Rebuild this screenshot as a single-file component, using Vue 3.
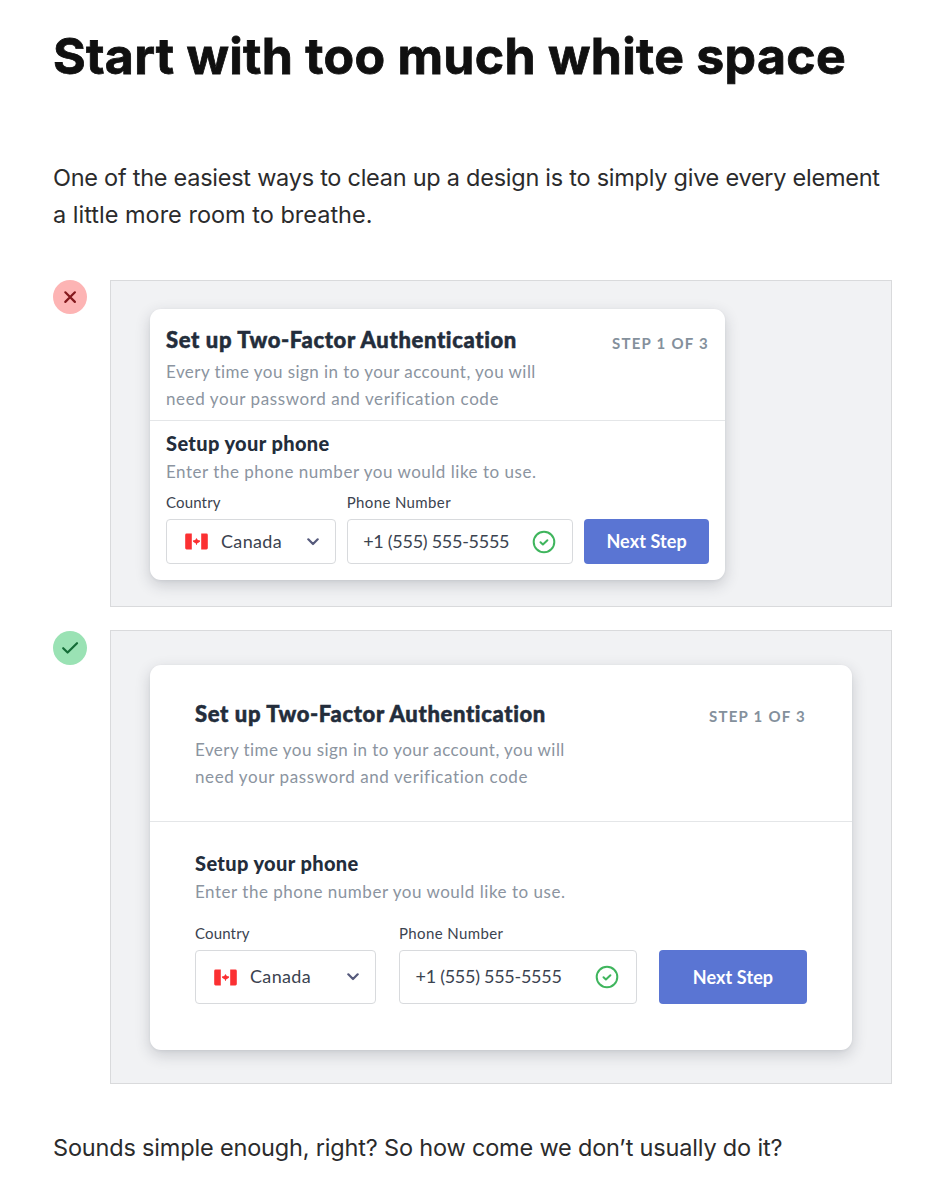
<script setup>
const examples = [
  { kind: 'tight', good: false },
  { kind: 'roomy', good: true },
]
</script>

<template>
  <main class="article">
    <h1>Start with too much white space</h1>
    <p class="intro"><span class="l1">One of the easiest ways to clean up a design is to simply give every element</span><br />a little more room to breathe.</p>

    <section v-for="ex in examples" :key="ex.kind" class="example" :class="ex.kind">
      <svg v-if="ex.good" class="badge" viewBox="0 0 34 34">
        <circle cx="17" cy="17" r="17" fill="#9ae2b4" />
        <path d="M10.200 17.200l4.400 4.300 9.400-9.300" fill="none" stroke="#146c37" stroke-width="2.200" stroke-linecap="round" stroke-linejoin="round" />
      </svg>
      <svg v-else class="badge" viewBox="0 0 34 34">
        <circle cx="17" cy="17" r="17" fill="#fdb4b4" />
        <path d="M12.300 12.300l9.600 9.600M21.900 12.300l-9.600 9.600" fill="none" stroke="#84191d" stroke-width="2.200" stroke-linecap="round" />
      </svg>

      <div class="stage">
        <div class="card">
          <header>
            <div>
              <h2>Set up Two-Factor Authentication</h2>
              <p class="desc">Every time you sign in to your account, you will<br /><span class="d2">need your password and verification code</span></p>
            </div>
            <div class="step">STEP 1 OF 3</div>
          </header>
          <div class="body">
            <h3>Setup your phone</h3>
            <p class="hint">Enter the phone number you would like to use.</p>
            <div class="form">
              <div class="field country">
                <label>Country</label>
                <div class="control">
                  <svg class="flag" viewBox="0 0 23 17">
                    <path d="M1.600.5h5.200v16H1.600A1.400 1.400 0 0 1 .2 15.100V1.900A1.400 1.400 0 0 1 1.600.5zM16.200.5h5.200a1.400 1.400 0 0 1 1.400 1.400v13.200a1.400 1.400 0 0 1-1.400 1.400h-5.200z" fill="#fb3032" />
                    <path d="M11.500 4.900l1.300 2.200 2.300.3-.2 1.400-2.300 1.500-.6.100v1.300h-1v-1.300l-.6-.1-2.300-1.500-.2-1.400 2.300-.3z" fill="#fb3032" />
                  </svg>
                  <span class="value">Canada</span>
                  <svg class="chevron" viewBox="0 0 12 8">
                    <path d="M1.300 1.300L6 6l4.700-4.700" fill="none" stroke="#565a7c" stroke-width="2.200" stroke-linecap="round" stroke-linejoin="round" />
                  </svg>
                </div>
              </div>
              <div class="field phone">
                <label>Phone Number</label>
                <div class="control">
                  <span class="value">+1 (555) 555-5555</span>
                  <svg class="valid" viewBox="0 0 24 24">
                    <circle cx="12" cy="12" r="10.300" fill="none" stroke="#3fb55d" stroke-width="2" />
                    <path d="M8.500 12.300l2.400 2.200 4.500-4.300" fill="none" stroke="#3fb55d" stroke-width="2" stroke-linecap="round" stroke-linejoin="round" />
                  </svg>
                </div>
              </div>
              <button type="button">Next Step</button>
            </div>
          </div>
        </div>
      </div>
    </section>

    <p class="outro">Sounds simple enough, right? So how come we don’t usually do it?</p>
  </main>
</template>

<style>
body { margin: 0; background: #fff; }
</style>

<style scoped>
* { box-sizing: border-box; }
h1, h2, h3, p { margin: 0; }
.article {
  width: 943px;
  height: 1200px;
  overflow: hidden;
  padding: 26px 51px 0 53px;
  font-family: Inter, sans-serif;
  color: #2b2b2c;
  white-space: nowrap;
}
h1 {
  font-size: 50px;
  line-height: 60px;
  font-weight: 700;
  letter-spacing: 0.280px;
  color: #101010;
  -webkit-text-stroke: 0.800px #101010;
}
.intro, .outro { font-size: 23.500px; line-height: 37px; }
.intro { margin-top: 73px; height: 74px; }
.l1 { letter-spacing: -0.260px; }
.example { display: flex; justify-content: space-between; align-items: flex-start; }
.tight { margin-top: 47px; }
.roomy { margin-top: 23px; }
.badge { width: 34px; height: 34px; display: block; }
.roomy .badge { margin-top: 1px; }
.stage {
  width: 782px;
  border: 1px solid #d9dadc;
  background: #f1f2f4;
  padding-left: 39px;
  font-family: Lato, sans-serif;
}
.tight .stage { height: 327px; padding-top: 28px; }
.roomy .stage { height: 454px; padding-top: 34px; }
.card {
  background: #fff;
  border-radius: 11px;
  box-shadow: 0 5px 15px rgba(40, 45, 60, 0.200), 0 1px 3px rgba(40, 45, 60, 0.060);
}
.tight .card { width: 575px; height: 271px; }
.roomy .card { width: 702px; height: 385px; }
header { display: flex; justify-content: space-between; border-bottom: 1px solid #e4e6e8; }
.tight header { height: 112px; padding: 17px 16px 0 16px; }
.roomy header { height: 157px; padding: 35px 46px 0 45px; }
h2 {
  font-size: 22px;
  line-height: 28px;
  font-weight: 900;
  letter-spacing: 0.640px;
  color: #232d3b;
  -webkit-text-stroke: 0.500px #232d3b;
}
.desc, .hint { font-size: 17px; line-height: 27px; color: #8b94a0; }
.desc { letter-spacing: 0.450px; }
.d2 { letter-spacing: 0.590px; }
.hint { letter-spacing: 0.520px; }
.tight .desc { margin-top: 4px; }
.roomy .desc { margin-top: 8px; }
.step { font-size: 15px; line-height: 20px; font-weight: 700; letter-spacing: 1.250px; color: #84909c; }
.tight .step { margin-top: 7px; }
.roomy .step { margin-top: 6px; }
.tight .body { padding: 10px 16px 0; }
.roomy .body { padding: 29px 45px 0; }
h3 {
  font-size: 20px;
  line-height: 26px;
  font-weight: 900;
  letter-spacing: 0.380px;
  color: #232d3b;
  position: relative;
  top: -1px;
}
.hint { margin-top: 1px; }
.form { display: flex; align-items: flex-end; }
.tight .form { margin-top: 7px; }
.roomy .form { margin-top: 18px; }
label { display: block; font-size: 15px; line-height: 20px; letter-spacing: 0.380px; color: #3b4350; margin-bottom: 7px; }
.country label { letter-spacing: 0.150px; }
.control {
  display: flex;
  align-items: center;
  border: 1px solid #d8dadd;
  border-radius: 4px;
  font-size: 18px;
  color: #3b4350;
}
.value { position: relative; top: -1px; }
.tight .control, .tight button { height: 45px; }
.roomy .control, .roomy button { height: 54px; }
.country .control { padding: 0 16px 0 18px; }
.country .value { letter-spacing: 0.350px; }
.phone .control { padding: 0 16px 0 15.500px; }
.phone .value { letter-spacing: -0.280px; }
.tight .country { width: 170px; margin-right: 11px; }
.roomy .country { width: 181px; margin-right: 23px; }
.tight .phone { width: 227px; margin-right: 11px; }
.roomy .phone { width: 238px; margin-right: 22px; }
.roomy .phone .control { padding-right: 17px; }
.flag { width: 23px; height: 17px; margin-right: 13px; }
.chevron { width: 12px; height: 8px; margin-left: auto; }
.valid { width: 24px; height: 24px; margin-left: auto; }
button {
  border: 0;
  border-radius: 4px;
  padding: 0 0 1px;
  background: #5a75d3;
  color: #fff;
  font: 700 18px Lato, sans-serif;
  letter-spacing: 0.100px;
}
.tight button { width: 125px; }
.roomy button { width: 148px; }
.outro { margin-top: 45px; letter-spacing: -0.180px; }
</style>
